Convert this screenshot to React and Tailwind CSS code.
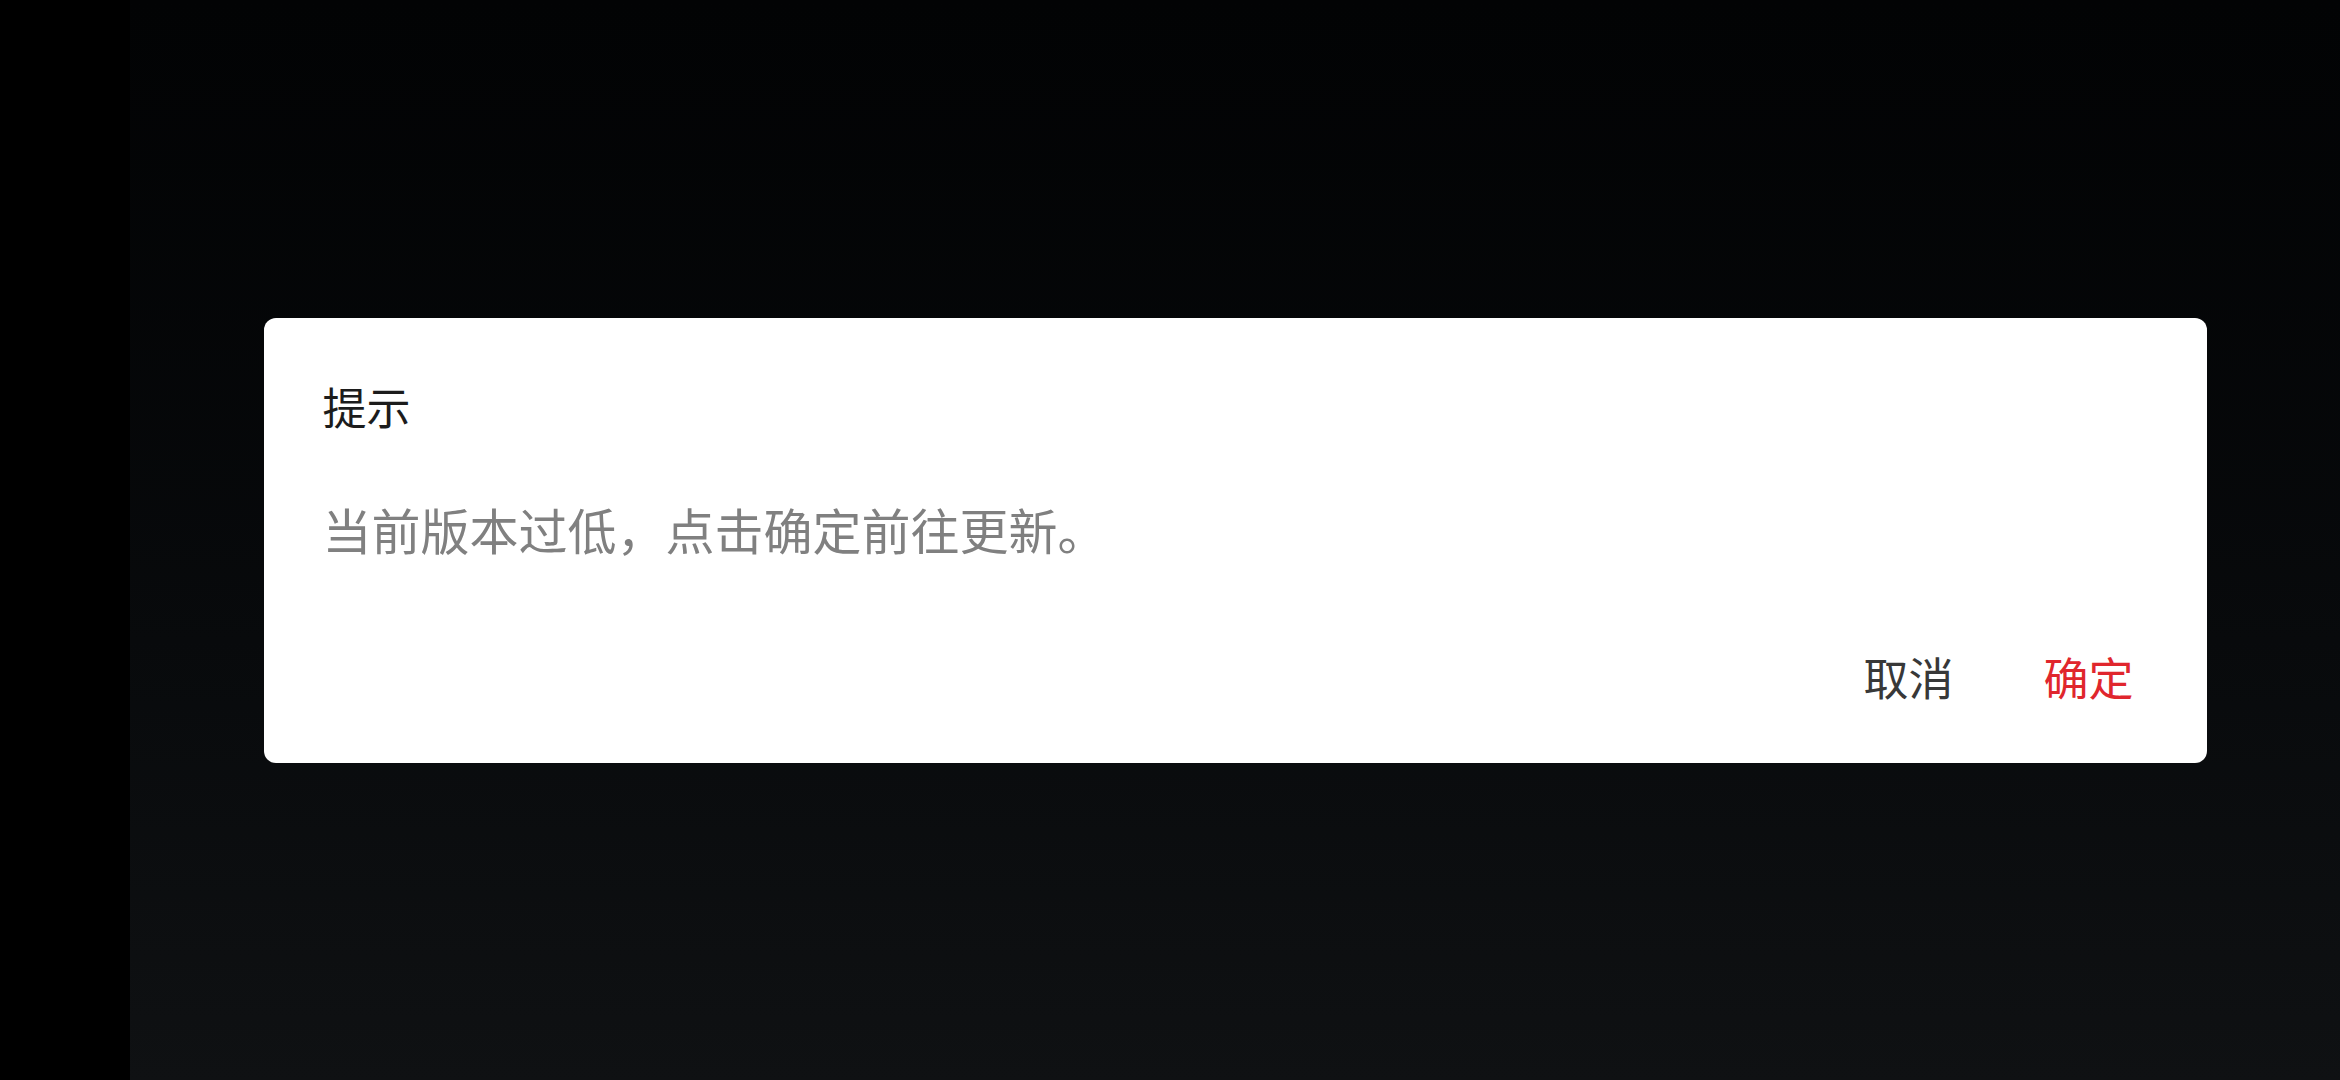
export default function App() {
  return (
    <div
      className="flex h-[1080px] w-[2340px] overflow-hidden bg-black"
      style={{ fontFamily: '"Noto Sans CJK SC", "Noto Sans", sans-serif' }}
    >
      {/* left rail */}
      <div className="h-full w-[130px] shrink-0 bg-black" />

      {/* content area with the update dialog */}
      <div className="flex flex-1 items-center justify-center bg-gradient-to-b from-[#020304] to-[#0f1113]">
        <div className="flex h-[445px] w-[1943px] flex-col rounded-[12px] bg-white px-[59px] pt-[66px] pb-[64px]">
          <h2 className="text-[44px] leading-[44px] font-normal text-[#1c1c1c]">提示</h2>
          <p className="mt-[76px] text-[49px] leading-[49px] text-[#808080]">
            当前版本过低，点击确定前往更新。
          </p>
          <div className="mt-auto flex justify-end gap-[90px] pr-[14px]">
            <button className="text-[45px] leading-[45px] text-[#383838]">取消</button>
            <button className="text-[45px] leading-[45px] text-[#e0262d]">确定</button>
          </div>
        </div>
      </div>
    </div>
  );
}
